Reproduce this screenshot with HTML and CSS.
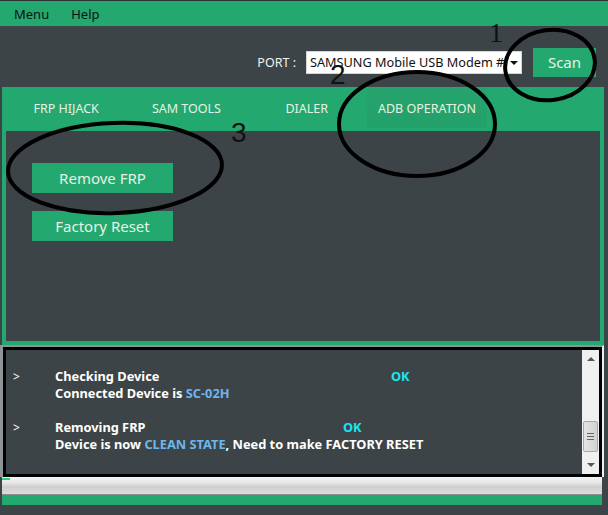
FILE: index.html
```html
<!DOCTYPE html>
<html>
<head>
<meta charset="utf-8">
<link rel="stylesheet" href="styles.css">
</head>
<body>
<div class="window">
  <div class="menubar">
    <span class="menu-item">Menu</span>
    <span class="menu-item">Help</span>
  </div>

  <div class="portrow">
    <span class="port-label">PORT :</span>
    <div class="combo">
      <span class="combo-text">SAMSUNG Mobile USB Modem #1</span>
      <span class="combo-arrow"></span>
    </div>
    <button class="btn scan">Scan</button>
  </div>

  <div class="tabpanel">
    <div class="tabstrip">
      <div class="tab">FRP HIJACK</div>
      <div class="tab">SAM TOOLS</div>
      <div class="tab">DIALER</div>
      <div class="tab active">ADB OPERATION</div>
    </div>
    <div class="tabpage">
      <button class="btn action">Remove FRP</button>
      <button class="btn action">Factory Reset</button>
    </div>
  </div>

  <div class="logframe">
    <div class="log">
      <div class="logtext">
        <div class="entry">
          <div class="line"><span class="prompt">&gt;</span><span class="msg">Checking Device</span><span class="ok ok1">OK</span></div>
          <div class="line"><span class="prompt"></span><span class="msg">Connected Device is <span class="hl">SC-02H</span></span></div>
        </div>
        <div class="entry">
          <div class="line"><span class="prompt">&gt;</span><span class="msg">Removing FRP</span><span class="ok ok2">OK</span></div>
          <div class="line"><span class="prompt"></span><span class="msg">Device is now <span class="hl">CLEAN STATE</span>, Need to make FACTORY RESET</span></div>
        </div>
      </div>
      <div class="scrollbar">
        <span class="arrow up"></span>
        <span class="thumb"><i></i><i></i><i></i></span>
        <span class="arrow down"></span>
      </div>
    </div>
  </div>

  <div class="progress"><span class="progress-fill"></span></div>
  <div class="statusbar"></div>

  <svg class="marks" width="608" height="515" viewBox="0 0 608 515">
    <g fill="none" stroke="#000" stroke-width="4">
      <ellipse cx="550" cy="65" rx="45" ry="35" transform="rotate(-8 550 65)"/>
      <ellipse cx="417" cy="124" rx="78" ry="52"/>
      <ellipse cx="115" cy="168" rx="107" ry="45" transform="rotate(-2 115 168)"/>
    </g>
  </svg>
  <span class="num n1">1</span>
  <span class="num n2">2</span>
  <span class="num n3">3</span>
</div>
</body>
</html>
```

FILE: styles.css
```css
* { box-sizing: border-box; }

html, body {
  margin: 0;
  padding: 0;
  background: #3c4447;
}

.window {
  position: relative;
  width: 608px;
  height: 515px;
  overflow: hidden;
  font-family: "Noto Sans", "Open Sans", sans-serif;
  border-top: 1px solid #2e3436;
}

/* top menu */
.menubar {
  height: 25px;
  background: #23a86f;
  display: flex;
  align-items: center;
  padding-left: 14px;
  gap: 22px;
}
.menu-item {
  font-size: 13px;
  color: #111;
}

/* port selection row */
.portrow {
  height: 61px;
  display: flex;
  align-items: center;
  justify-content: flex-end;
  padding-right: 12px;
  padding-top: 11px;
}
.port-label {
  color: #f2f2f2;
  font-size: 12.5px;
  margin-right: 10px;
}
.combo {
  width: 216px;
  height: 23px;
  background: #fff;
  display: flex;
  align-items: center;
  border: 1px solid #d6d6d6;
  margin-right: 11px;
}
.combo-text {
  flex: 1;
  overflow: hidden;
  white-space: nowrap;
  font-size: 12.7px;
  color: #111;
  padding-left: 3px;
}
.combo-arrow {
  width: 14px;
  height: 21px;
  position: relative;
  background: #fff;
}
.combo-arrow::after {
  content: "";
  position: absolute;
  left: 3px;
  top: 9px;
  border-left: 4px solid transparent;
  border-right: 4px solid transparent;
  border-top: 4px solid #111;
}

.btn {
  border: none;
  background: #23a86f;
  color: #e8f2e4;
  font-family: inherit;
  padding: 0;
  cursor: default;
}
.scan {
  width: 63px;
  height: 29px;
  font-size: 15px;
}

/* tab control */
.tabpanel {
  margin: 0 4px 0 2px;
  background: #23a86f;
  padding: 0 4px 4px 4px;
}
.tabstrip {
  height: 44px;
  display: flex;
  padding-top: 1px;
}
.tab {
  width: 120.3px;
  height: 40px;
  display: flex;
  align-items: center;
  justify-content: center;
  font-size: 12.5px;
  color: #e8f2e4;
}
.tab.active {
  background: linear-gradient(#27a36d, #23a16a);
}
.tabpage {
  height: 210px;
  background: #3c4447;
  padding: 32px 0 0 26px;
  display: flex;
  flex-direction: column;
  gap: 18px;
}
.action {
  width: 141px;
  height: 30px;
  font-size: 15px;
}

/* output log */
.logframe {
  margin: 0 4px 0 0;
  border-top: 2px solid #8e9495;
  border-left: 3px solid #8e9495;
  border-right: 2px solid #eeeeee;
}
.log {
  height: 130px;
  border: 3px solid #000;
  display: flex;
  background: #3c4447;
}
.logtext {
  flex: 1;
  padding-top: 18px;
  color: #fff;
  font-size: 12.8px;
  font-weight: 700;
}
.entry {
  margin-bottom: 17px;
}
.line {
  height: 17px;
  line-height: 17px;
  display: flex;
  position: relative;
  white-space: nowrap;
}
.prompt {
  width: 49px;
  padding-left: 7px;
  font-weight: 400;
  font-size: 12px;
}
.hl { color: #6cb6ee; }
.ok {
  position: absolute;
  color: #19e6f2;
}
.ok1 { left: 385px; }
.ok2 { left: 337px; }

.scrollbar {
  width: 17px;
  background: #f0f0f0;
  position: relative;
}
.arrow {
  position: absolute;
  left: 5px;
  border-left: 4px solid transparent;
  border-right: 4px solid transparent;
}
.arrow.up { top: 7px; border-bottom: 4px solid #555; }
.arrow.down { bottom: 7px; border-top: 4px solid #555; }
.thumb {
  position: absolute;
  left: 1px;
  right: 1px;
  top: 71px;
  height: 31px;
  border: 1px solid #a9a9a9;
  border-radius: 2px;
  background: linear-gradient(90deg, #e4e4e4, #d2d2d2);
  display: flex;
  flex-direction: column;
  justify-content: center;
  align-items: center;
  gap: 2px;
}
.thumb i {
  display: block;
  width: 7px;
  height: 1px;
  background: #666;
}

/* progress and status */
.progress {
  position: relative;
  margin: 0 6px 0 2px;
  height: 18px;
  border-top: 1px solid #f4f4f4;
  border-bottom: 1px solid #8d8d8d;
  background: linear-gradient(#f2f2f2 0%, #e6e6e6 30%, #cfcfcf 55%, #dcdcdc 100%);
}
.progress-fill {
  position: absolute;
  left: 0;
  top: 0;
  width: 8px;
  height: 2px;
  background: #2ad07a;
}
.statusbar {
  margin: 0 6px 0 2px;
  height: 10px;
  background: #23a86f;
}

/* hand-drawn markers on top of the window */
.marks {
  position: absolute;
  left: 0;
  top: -1px;
  pointer-events: none;
}
.num {
  position: absolute;
  font-family: "Liberation Sans", sans-serif;
  font-size: 28px;
  line-height: 1;
  color: #111;
}
.n1 { left: 489px; top: 18px; font-family: "Liberation Serif", serif; }
.n2 { left: 330px; top: 60px; }
.n3 { left: 231px; top: 118px; }
```
